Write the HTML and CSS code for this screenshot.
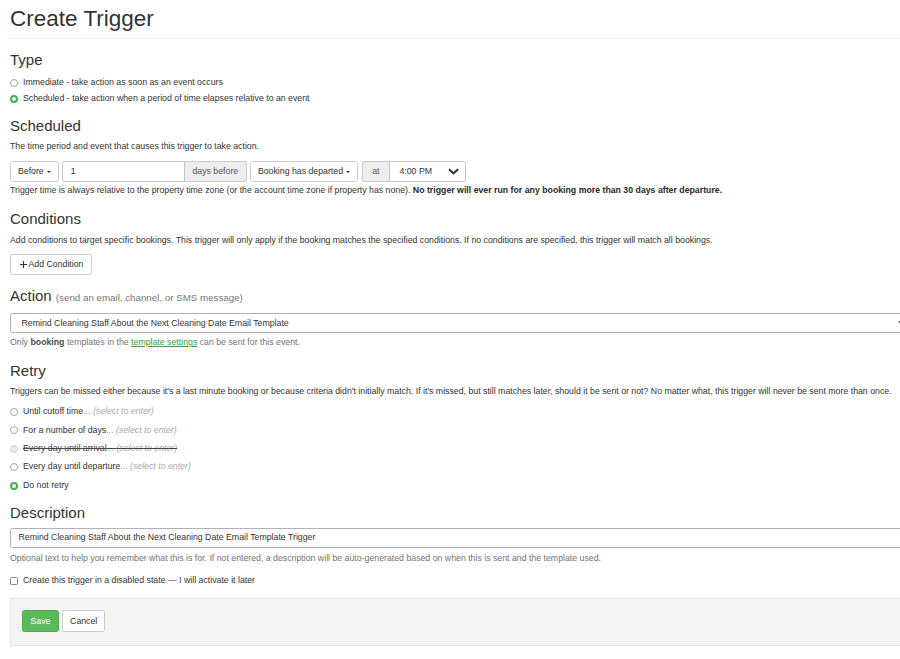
FILE: index.html
```html
<!DOCTYPE html>
<html>
<head>
<meta charset="utf-8">
<title>Create Trigger</title>
<link rel="stylesheet" href="styles.css">
</head>
<body>
<div class="page">
  <div class="page-header"><h1>Create Trigger</h1></div>

  <h3 class="h-type">Type</h3>
  <div class="opts opts-type">
    <div class="opt"><span class="rb"></span><span>Immediate - take action as soon as an event occurs</span></div>
    <div class="opt"><span class="rb on"></span><span>Scheduled - take action when a period of time elapses relative to an event</span></div>
  </div>

  <h3 class="h-sec h-sched">Scheduled</h3>
  <p class="desc d-sched">The time period and event that causes this trigger to take action.</p>
  <div class="ig">
    <div class="btn b-before">Before<span class="caret"></span></div>
    <div class="grp g-days">
      <div class="ctl c-num">1</div>
      <div class="addon a-days">days before</div>
    </div>
    <div class="btn b-event">Booking has departed<span class="caret"></span></div>
    <div class="grp g-at">
      <div class="addon a-at">at</div>
      <div class="ctl c-time"><span>4:00 PM</span>
        <svg class="chev" width="11" height="7" viewBox="0 0 11 7"><polyline points="1,1.3 5.5,5.3 10,1.3" fill="none" stroke="#333" stroke-width="2"/></svg>
      </div>
    </div>
  </div>
  <p class="desc d-note">Trigger time is always relative to the property time zone (or the account time zone if property has none). <b>No trigger will ever run for any booking more than 30 days after departure.</b></p>

  <h3 class="h-sec">Conditions</h3>
  <p class="desc d-cond">Add conditions to target specific bookings. This trigger will only apply if the booking matches the specified conditions. If no conditions are specified, this trigger will match all bookings.</p>
  <div class="btn b-add"><svg class="plus" width="7" height="7" viewBox="0 0 7 7"><path d="M3.5 0V7M0 3.5H7" stroke="#333" stroke-width="1.1"/></svg>Add Condition</div>

  <h3 class="h-sec h-action">Action <small>(send an email, channel, or SMS message)</small></h3>
  <div class="wide sel-action">Remind Cleaning Staff About the Next Cleaning Date Email Template</div>
  <p class="help h-after">Only <b>booking</b> templates in the <a class="lnk" href="#">template settings</a> can be sent for this event.</p>

  <h3 class="h-sec h-retry">Retry</h3>
  <p class="desc d-retry">Triggers can be missed either because it's a last minute booking or because criteria didn't initially match. If it's missed, but still matches later, should it be sent or not? No matter what, this trigger will never be sent more than once.</p>
  <div class="opts opts-retry">
    <div class="opt"><span class="rb"></span><span>Until cutoff time<span class="dots">...</span> <i class="hint">(select to enter)</i></span></div>
    <div class="opt"><span class="rb"></span><span>For a number of days<span class="dots">...</span> <i class="hint">(select to enter)</i></span></div>
    <div class="opt dis"><span class="rb off"></span><span class="strike">Every day until arrival<span class="dots">...</span> <i class="hint">(select to enter)</i></span></div>
    <div class="opt"><span class="rb"></span><span>Every day until departure<span class="dots">...</span> <i class="hint">(select to enter)</i></span></div>
    <div class="opt"><span class="rb on"></span><span>Do not retry</span></div>
  </div>

  <h3 class="h-sec h-desc">Description</h3>
  <div class="wide inp-desc">Remind Cleaning Staff About the Next Cleaning Date Email Template Trigger</div>
  <p class="help h-after2">Optional text to help you remember what this is for. If not entered, a description will be auto-generated based on when this is sent and the template used.</p>
  <div class="opt chk-row"><span class="cb"></span><span>Create this trigger in a disabled state — I will activate it later</span></div>

  <div class="footer">
    <div class="btn b-save">Save</div>
    <div class="btn b-cancel">Cancel</div>
  </div>
</div>
</body>
</html>
```
FILE: styles.css
```css
html, body {
  margin: 0;
  padding: 0;
  overflow: hidden;
  background: #fff;
}
body {
  font-family: "Liberation Sans", Arial, sans-serif;
  font-size: 8.75px;
  line-height: 12.5px;
  color: #333;
}
.page {
  width: 905px;
  padding-left: 10px;
}
h1 {
  margin: 7px 0 0;
  font-size: 22.5px;
  line-height: 24.75px;
  font-weight: normal;
}
.page-header {
  padding-bottom: 6px;
  border-bottom: 1px solid #eee;
}
h3 {
  margin: 0;
  font-size: 15px;
  line-height: 16.5px;
  font-weight: normal;
}
h3 small {
  font-size: 9.75px;
  color: #777;
}
.h-type { margin-top: 13.25px; }
.h-sec { margin-top: 14.4px; }
.h-sched { margin-top: 13.9px; }
.h-action { margin-top: 13.6px; }
.h-retry { margin-top: 14.1px; }
.h-desc { margin-top: 13.6px; }

p { margin: 0; }
.d-sched { margin-top: 5.6px; }
.d-note { margin-top: 2.5px; }
.d-note b { color: #2a2a2a; }
.d-cond { margin-top: 6.3px; }
.d-retry { margin-top: 6.2px; }

.help { color: #737373; }
.help b { color: #4a4a4a; }
.h-after { margin-top: 3.3px; }
.h-after2 { margin-top: 4.1px; }
.lnk {
  color: #3a9a3a;
  text-decoration: underline;
}

.opts { display: flex; flex-direction: column; }
.opts-type { margin-top: 7.4px; gap: 3.5px; }
.opts-retry { margin-top: 7.2px; gap: 5.95px; }
.opt {
  display: flex;
  align-items: center;
  height: 12.5px;
}
.rb {
  box-sizing: border-box;
  width: 8px;
  height: 8px;
  margin: 1px 5px 0 0;
  border-radius: 50%;
  border: 1px solid #a5a5a5;
  background: #fff;
  flex: none;
}
.rb.on {
  border: 2.5px solid #4cae4c;
  background: #f4fbf4;
}
.rb.off {
  border-color: #d6d6d6;
  background: #e8e8e8;
}
.dots { color: #999; }
.hint { color: #aaa; }
.strike { text-decoration: line-through; }
.dis .strike { color: #444; }

.cb {
  box-sizing: border-box;
  width: 8px;
  height: 8px;
  margin: 1px 5px 0 0;
  border: 1px solid #8a8a8a;
  border-radius: 1.5px;
  background: #fff;
  flex: none;
}
.chk-row { margin-top: 9.6px; }

.btn {
  box-sizing: border-box;
  display: inline-flex;
  align-items: center;
  justify-content: center;
  border: 1px solid #ccc;
  border-radius: 2.5px;
  background: #fff;
  color: #333;
  padding: 0 7px;
  white-space: nowrap;
}
.caret {
  display: inline-block;
  width: 0;
  height: 0;
  margin-left: 3px;
  margin-top: 1px;
  border-top: 2.5px solid #333;
  border-left: 2.5px solid transparent;
  border-right: 2.5px solid transparent;
}

.ig {
  display: flex;
  margin-top: 8.5px;
  height: 20.5px;
}
.ig > * { height: 100%; }
.b-before { width: 48.7px; padding: 0; }
.grp { display: flex; }
.g-days { margin-left: 3px; }
.b-event { margin-left: 3.6px; width: 107.4px; padding: 0; }
.g-at { margin-left: 4px; }
.ctl {
  box-sizing: border-box;
  display: flex;
  align-items: center;
  border: 1px solid #c2c6ca;
  background: #fff;
}
.addon {
  box-sizing: border-box;
  display: flex;
  align-items: center;
  justify-content: center;
  border: 1px solid #ccc;
  background: #eee;
  color: #555;
}
.c-num {
  width: 123.3px;
  padding-left: 8px;
  border-radius: 2.5px 0 0 2.5px;
}
.a-days {
  width: 61.7px;
  border-left: 0;
  border-radius: 0 2.5px 2.5px 0;
}
.a-at {
  width: 27.3px;
  border-right: 0;
  border-radius: 2.5px 0 0 2.5px;
}
.c-time {
  width: 77.3px;
  padding: 0 6px 0 9.5px;
  justify-content: space-between;
  border-radius: 0 2.5px 2.5px 0;
}
.chev { display: block; }

.b-add {
  margin-top: 7.4px;
  height: 20.7px;
  padding: 0 8px 0 8.5px;
}
.plus { margin-right: 2px; display: block; }

.wide {
  box-sizing: border-box;
  height: 20px;
  display: flex;
  align-items: center;
  border: 1px solid #adb3b9;
  border-radius: 2.5px;
  background: #fff;
  color: #333;
}
.sel-action {
  margin-top: 6.1px;
  padding-left: 10.5px;
  position: relative;
}
.sel-action::after {
  content: "";
  position: absolute;
  right: 10.5px;
  top: 7px;
  width: 0;
  height: 0;
  border-top: 4px solid #555;
  border-left: 3.5px solid transparent;
  border-right: 3.5px solid transparent;
}
.inp-desc {
  margin-top: 6.2px;
  padding-left: 7.5px;
}

.footer {
  margin-top: 11.2px;
  display: flex;
  gap: 3px;
  background: #f4f4f4;
  border: 1px solid #e5e5e5;
  padding: 11.7px 11px 13.3px;
}
.footer .btn { height: 21.7px; }
.b-save {
  background: #5cb85c;
  border-color: #4cae4c;
  color: #fff;
  width: 37px;
  padding: 0;
}
.b-cancel {
  width: 43.4px;
  padding: 0;
}
```
